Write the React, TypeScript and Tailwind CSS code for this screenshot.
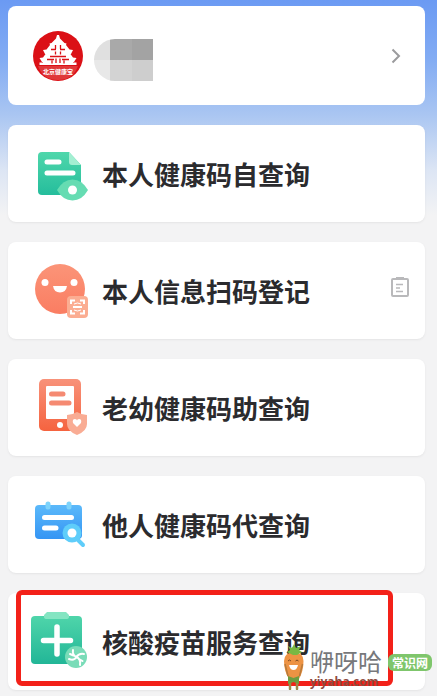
import type { ReactNode } from "react";

function LogoIcon() {
  return (
    <svg viewBox="0 0 50 50" className="size-[50px] shrink-0" role="img" aria-label="北京健康宝">
      <circle cx="25" cy="25" r="25" fill="#db1016" />
      <path d="M5 35h40q-5 14-20 14T5 35z" fill="#e0383a" />
      <g fill="#fff">
        <path d="M24 4h2l1 3.500 4.500 4.500 2 .5-1 3h-15l-1-3 2-.5L23 7.500z" />
        <path d="M17 14h16l3.500 4.500 3.500.5-2 4H12l-2-4 3.500-.5z" />
        <path d="M14 21h22l4 5.500 3.500.5-2.500 4H9l-2.500-4 3.500-.5z" />
        <path d="M10 29h30v2.500h3.500V34h-37v-2.500H10z" />
      </g>
      <g stroke="#db1016" strokeWidth="1.300" fill="none">
        <path d="M22.500 14v4M27.500 14v4M18 18.500h5M27 18.500h5M22.500 20.500v3M27.500 20.500v3M17 25.500h16M19 29.500v3M31 29.500v3M23 27.500v4.500M27 27.500v4.500M14 28.500h7M29 28.500h7" />
      </g>
      <text
        x="25"
        y="43"
        textAnchor="middle"
        fill="#fff"
        fontSize="6"
        fontWeight="700"
        fontFamily="Noto Sans CJK SC, sans-serif"
      >
        北京健康宝
      </text>
    </svg>
  );
}

function DocumentIcon() {
  return (
    <svg viewBox="0 0 57 57" className="size-[57px] shrink-0" aria-hidden="true">
      <defs>
        <linearGradient id="doc" x1="0" y1="0" x2="0" y2="1">
          <stop offset="0" stopColor="#4fd7ab" />
          <stop offset="1" stopColor="#25bd9c" />
        </linearGradient>
      </defs>
      <path d="M10 7h27l12 13v26q0 4-4 4H10q-4 0-4-4V11q0-4 4-4z" fill="url(#doc)" />
      <path d="M37 7l12 13h-9q-3 0-3-3z" fill="#a4efd2" />
      <path d="M15 17h12M15 28h26" stroke="#fff" strokeWidth="5" strokeLinecap="round" />
      <path d="M25 45q6-10.500 15.500-10.500T56 45q-6 10.500-15.500 10.500T25 45z" fill="#66dcb2" />
      <circle cx="40.500" cy="45" r="4.500" fill="#fff" />
    </svg>
  );
}

function FaceIcon() {
  return (
    <svg viewBox="0 0 57 57" className="size-[57px] shrink-0" aria-hidden="true">
      <defs>
        <linearGradient id="face" x1="0" y1="0" x2="0" y2="1">
          <stop offset="0" stopColor="#fb9478" />
          <stop offset="1" stopColor="#fa7d62" />
        </linearGradient>
      </defs>
      <circle cx="28" cy="27" r="25" fill="url(#face)" />
      <circle cx="13" cy="20.500" r="3.500" fill="#fff" />
      <circle cx="42" cy="20.500" r="3.500" fill="#fff" />
      <path d="M21 24h14q-1 6.500-7 6.500T21 24z" fill="#fff" />
      <rect x="35" y="34" width="21" height="22" rx="4" fill="#fbad92" />
      <path
        d="M39 42v-3.500h4M48 38.500h4V42M52 48v3.500h-4M43 51.500h-4V48M41 45h9"
        fill="none"
        stroke="#fff"
        strokeWidth="2"
      />
      <path d="M42 42q3.500-2 7 0M42 48q3.500 2 7 0" fill="none" stroke="#fff" />
    </svg>
  );
}

function TabletIcon() {
  return (
    <svg viewBox="0 0 57 57" className="size-[57px] shrink-0" aria-hidden="true">
      <defs>
        <linearGradient id="tablet" x1="0" y1="0" x2="0" y2="1">
          <stop offset="0" stopColor="#f8927a" />
          <stop offset="1" stopColor="#f5633f" />
        </linearGradient>
      </defs>
      <rect x="7" y="0" width="42" height="52" rx="5" fill="url(#tablet)" />
      <rect x="14" y="7" width="28" height="33" rx="1" fill="#fff" />
      <path d="M19.500 15H31M19.500 24H37" stroke="#f58a72" strokeWidth="5" strokeLinecap="round" />
      <circle cx="28" cy="46" r="3" fill="#fff" />
      <path d="M45 33q5 3 10 3v9q0 7-10 11-10-4-10-11v-9q5 0 10-3z" fill="#f9ac94" />
      <path d="M45 48l-4-4q-1-4 2-4 2 0 2 1.500Q45 40 47 40q3 0 2 4z" fill="#fff" />
    </svg>
  );
}

function CalendarIcon() {
  return (
    <svg viewBox="0 0 57 57" className="size-[57px] shrink-0" aria-hidden="true">
      <defs>
        <linearGradient id="calendar" x1="0" y1="0" x2="0" y2="1">
          <stop offset="0" stopColor="#5bb9fa" />
          <stop offset="1" stopColor="#3595f4" />
        </linearGradient>
      </defs>
      <rect x="3" y="9" width="47" height="34" rx="4" fill="url(#calendar)" />
      <path d="M16 8v3M37 8v3" stroke="#7dd3fb" strokeWidth="5" strokeLinecap="round" />
      <path d="M12.500 21.500h27M12.500 32H24" stroke="#fff" strokeWidth="5" strokeLinecap="round" />
      <path d="M45 43l6 6" stroke="#5fcdfa" strokeWidth="4" strokeLinecap="round" />
      <circle cx="40" cy="37" r="9.500" fill="#5fcdfa" />
      <circle cx="40" cy="37" r="4.500" fill="#fff" />
    </svg>
  );
}

function ClipboardPlusIcon() {
  return (
    <svg viewBox="0 0 57 57" className="size-[57px] shrink-0 overflow-visible" aria-hidden="true">
      <defs>
        <linearGradient id="plus" x1="0" y1="0" x2="0" y2="1">
          <stop offset="0" stopColor="#4fd5aa" />
          <stop offset="1" stopColor="#22b697" />
        </linearGradient>
      </defs>
      <rect x="-1" y="3" width="51" height="48" rx="4" fill="url(#plus)" />
      <path d="M15-1h19l3 3v2q0 2-3 2H15q-3 0-3-2V2z" fill="#84e5c2" />
      <path d="M25 14v27M11.500 27.500h27" stroke="#fff" strokeWidth="5.500" strokeLinecap="round" />
      <circle cx="44" cy="44" r="11" fill="#79dcb8" />
      <path
        d="M41 37q-1 5 3.500 7t3.500 8M37 46q5 2 7.500-2t7.500-3M38 41l3.500 1.500M50.500 48L47 46"
        fill="none"
        stroke="#fff"
        strokeWidth="2"
        strokeLinecap="round"
      />
    </svg>
  );
}

function Watermark() {
  return (
    <div className="absolute right-[-7px] bottom-0 flex items-end">
      <svg viewBox="0 0 22 46" className="mr-[5px] h-[46px] w-[22px]" aria-hidden="true">
        <path d="M7 37v8M14 37v8" stroke="#9c8a4a" strokeWidth="2.500" strokeLinecap="round" />
        <path d="M10.500 8Q21 9 20.500 17q0 10-4.500 18H6Q1 27 1 17 1 9 10.500 8z" fill="#ed9344" />
        <path d="M10 11L4 8l3-2-2-4 4 2 2-4 2 4 5-2-2 4 3 2-5 3z" fill="#78b843" />
        <path d="M5 32l5.500 2 5.500-2v8l-5.500-2L5 40z" fill="#6e9c40" />
        <path d="M2 20l3 12M19.500 20l-3 12" stroke="#b97b39" strokeWidth="1.500" fill="none" />
        <path d="M5 17q1.500-2 3 0M12.500 17q1.500-2 3 0" stroke="#7a4a20" fill="none" />
        <path d="M6 21h9q-1 5-4.500 5T6 21z" fill="#fff" />
      </svg>
      <div className="mr-[6px] flex flex-col">
        <span className="font-['Noto_Sans_CJK_SC',sans-serif] text-[24px] leading-[26px] text-[#77787b]">
          咿呀哈
        </span>
        <span className="font-['Open_Sans',sans-serif] text-[12px] leading-[16px] font-bold text-[#8f4a3c]">
          yiyaha.com
        </span>
      </div>
      <span className="mb-[19px] rounded-md bg-[#7fc66c] px-[4px] text-[12px] leading-[17px] font-bold text-white">
        常识网
      </span>
    </div>
  );
}

type Service = {
  title: string;
  icon: ReactNode;
  records?: boolean;
  highlighted?: boolean;
};

const services: Service[] = [
  { title: "本人健康码自查询", icon: <DocumentIcon /> },
  { title: "本人信息扫码登记", icon: <FaceIcon />, records: true },
  { title: "老幼健康码助查询", icon: <TabletIcon /> },
  { title: "他人健康码代查询", icon: <CalendarIcon /> },
  { title: "核酸疫苗服务查询", icon: <ClipboardPlusIcon />, highlighted: true },
];

function ServiceCard({ title, icon, records, highlighted }: Service) {
  return (
    <li className="relative flex h-[97px] items-center rounded-lg bg-white shadow-sm shadow-black/5">
      <button type="button" className="flex h-full flex-1 items-center gap-[13px] pl-6 text-left">
        {icon}
        <span className="text-[26px] leading-[36px] font-bold whitespace-nowrap text-[#2b2b2e]">
          {title}
        </span>
      </button>
      {records && (
        <button type="button" aria-label="登记记录" className="mr-[15px] mb-[8px]">
          <svg viewBox="0 0 20 22" className="h-[22px] w-[20px]" fill="none" stroke="#b9b9bb" strokeWidth="2">
            <rect x="2" y="3" width="16" height="17" rx="1" />
            <path d="M6 2.500h8" strokeWidth="3" />
            <path d="M6 8.500h7M6 12h4M6 15.500h7" strokeWidth="1.500" />
          </svg>
        </button>
      )}
      {highlighted && (
        <>
          <div className="pointer-events-none absolute top-[-3px] right-[32px] bottom-[4px] left-[8px] rounded-md border-[5px] border-[#f32119]" />
          <Watermark />
        </>
      )}
    </li>
  );
}

export default function App() {
  return (
    <main className="min-h-screen bg-[#f3f3f4] bg-[linear-gradient(180deg,#6b9af3_0px,#83acf3_60px,#aac6f2_115px,#dce5f4_170px,#f3f3f4_215px)] pt-[6px] pr-[12px] pb-[6px] pl-[8px] font-['Noto_Sans_CJK_SC',sans-serif]">
      <button
        type="button"
        aria-label="个人信息"
        className="flex h-[99px] w-full items-center rounded-lg bg-white pr-[24px] pl-[25px]"
      >
        <LogoIcon />
        <span className="mt-[8px] ml-[11px] grid grid-cols-[16px_22px_21px] grid-rows-[21px_21px] overflow-hidden rounded-l-full">
          <span className="bg-[#e0e0e0]" />
          <span className="bg-[#a9a9a9]" />
          <span className="bg-[#a3a3a3]" />
          <span className="bg-[#e8e8e8]" />
          <span className="bg-[#d3d3d3]" />
          <span className="bg-[#cecece]" />
        </span>
        <svg viewBox="0 0 10 16" className="ml-auto h-[16px] w-[10px]" fill="none" aria-hidden="true">
          <path d="M1.500 1.500L8 8l-6.500 6.500" stroke="#9b9b9d" strokeWidth="2" />
        </svg>
      </button>
      <ul className="mt-5 flex flex-col gap-5">
        {services.map((service) => (
          <ServiceCard key={service.title} {...service} />
        ))}
      </ul>
    </main>
  );
}
